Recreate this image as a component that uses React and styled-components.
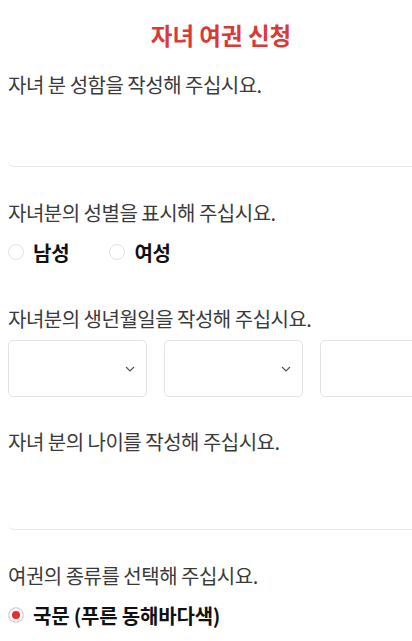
import React, {useState} from "react";
import styled, {createGlobalStyle} from "styled-components";

const GlobalStyle = createGlobalStyle`
  html, body {
    margin: 0;
    padding: 0;
    background: #fff;
    overflow-x: hidden;
  }
  body {
    font-family: "Noto Sans CJK KR", "Noto Sans", sans-serif;
  }
`;

function Radio({checked, label, onClick}){
  return (
    <RadioLabel onClick={onClick}>
      <RadioDot checked={checked} />
      <span>{label}</span>
    </RadioLabel>
  );
}

function DateSelect({arrow = true}){
  return (
    <SelectBox>
      {arrow && (
        <svg width="10" height="6" viewBox="0 0 10 6" fill="none">
          <path d="M1 1l4 4 4-4" stroke="#555" strokeWidth="1.2" />
        </svg>
      )}
    </SelectBox>
  );
}

export default function App(){
  const [gender, setGender] = useState(null);
  const [type, setType] = useState("normal");

  return (
    <Page>
      <GlobalStyle />
      <Title>자녀 여권 신청</Title>

      <Question top={22}>자녀 분 성함을 작성해 주십시요.</Question>
      <LineInput height={61} />

      <Question top={33}>자녀분의 성별을 표시해 주십시요.</Question>
      <RadioRow>
        <Radio label="남성" checked={gender === "m"} onClick={() => setGender("m")} />
        <Radio label="여성" checked={gender === "f"} onClick={() => setGender("f")} />
      </RadioRow>

      <Question top={42}>자녀분의 생년월일을 작성해 주십시요.</Question>
      <DateRow>
        <DateSelect />
        <DateSelect />
        <DateSelect arrow={false} />
      </DateRow>

      <Question top={32}>자녀 분의 나이를 작성해 주십시요.</Question>
      <LineInput height={67} />

      <Question top={33}>여권의 종류를 선택해 주십시요.</Question>
      <RadioRow>
        <Radio label="국문 (푸른 동해바다색)" checked={type === "normal"} onClick={() => setType("normal")} />
      </RadioRow>
    </Page>
  );
}

const Page = styled.div`
  width: 426px;
  padding: 20px 0 40px 8px;
  display: flex;
  flex-direction: column;
`;

const Title = styled.h1`
  margin: 0;
  font-size: 23.5px;
  line-height: 30px;
  font-weight: 700;
  color: #d83a3a;
  text-align: center;
`;

const Question = styled.p`
  margin: ${props => props.top}px 0 0;
  font-size: 20px;
  line-height: 26px;
  font-weight: 400;
  color: #3a3a3a;
  letter-spacing: -0.5px;
`;

const LineInput = styled.div`
  margin-top: 7px;
  height: ${props => props.height}px;
  border-bottom: 1px solid #e9e9e9;
  border-radius: 0 0 0 6px;
`;

const RadioRow = styled.div`
  margin-top: 14px;
  display: flex;
  gap: 40px;
  height: 24px;
  align-items: center;
`;

const RadioLabel = styled.label`
  display: flex;
  align-items: center;
  gap: 9px;
  font-size: 20px;
  font-weight: 600;
  color: #111;
  letter-spacing: -0.2px;
  cursor: pointer;
`;

const RadioDot = styled.span`
  width: 16px;
  height: 16px;
  box-sizing: border-box;
  border-radius: 50%;
  border: 1px solid #e4e4e4;
  background: ${props => props.checked ? "#e52e2e" : "#fff"};
  box-shadow: ${props => props.checked ? "inset 0 0 0 3px #fff" : "none"};
`;

const DateRow = styled.div`
  margin-top: 8px;
  display: grid;
  grid-template-columns: repeat(3, 139px);
  gap: 17px;
`;

const SelectBox = styled.div`
  height: 57px;
  box-sizing: border-box;
  border: 1px solid #e3e3e3;
  border-radius: 5px;
  display: flex;
  align-items: center;
  justify-content: flex-end;
  padding-right: 11px;
`;
